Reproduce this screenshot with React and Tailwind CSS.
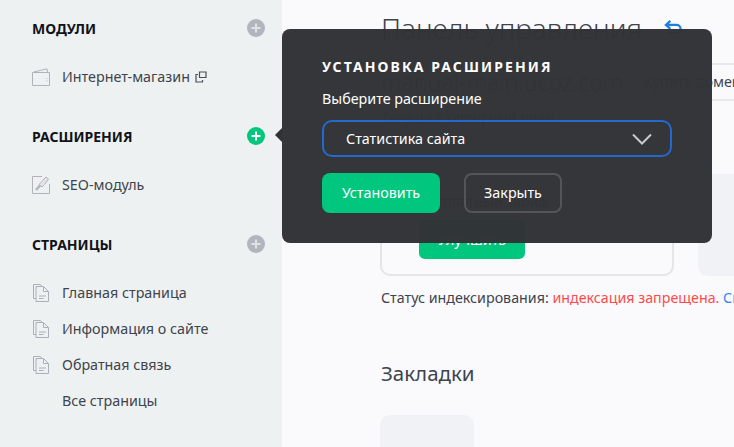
import React from "react";

const PlusIcon = ({ active }) => (
  <span className={`w-[18px] h-[18px] rounded-full flex items-center justify-center ${active ? "bg-[#00c77d]" : "bg-[#b1b5bd]"}`}>
    <svg width="10" height="10" viewBox="0 0 10 10">
      <path d="M5 0.5v9M0.5 5h9" stroke={active ? "#ffffff" : "#dfe2e6"} strokeWidth="2" />
    </svg>
  </span>
);

const WalletIcon = () => (
  <svg width="18" height="18" viewBox="0 0 18 18" fill="none" stroke="#b0b3b8">
    <path d="M0.500 4.500h17v13h-17z" strokeWidth="1" />
    <path d="M1.500 4L15 0.800l.6 3.500" strokeWidth="1" />
    <path d="M15 10v.8M15 12.500v.8" strokeWidth="1" />
  </svg>
);

const SeoIcon = () => (
  <svg width="18" height="18" viewBox="0 0 18 18" fill="none" stroke="#b0b3b8">
    <path d="M10 0.500H0.500v17h17V8" strokeWidth="1" />
    <path d="M7 8.500l2-2 5-5.500 2.500 2-4 5.500-2.500 2.500z" fill="#e3e5e7" strokeWidth="1" />
    <path d="M4 14l4-4.500" strokeWidth="2.500" />
  </svg>
);

const PageIcon = () => (
  <svg width="16" height="18" viewBox="0 0 16 18" fill="none" stroke="#a9b0ba" className="ml-[1px]">
    <path d="M3 14.500H0.500V0.500h7l2 2.500" strokeWidth="1" />
    <path d="M3 17.500V2.500h7.500l5 5v10H3z" fill="#edf1f2" strokeWidth="1" />
    <path d="M6 12h7M6 14.500h4.500" strokeWidth="1" />
    <path d="M10.500 3v4.500h5" strokeWidth="1" />
  </svg>
);

const CopyIcon = () => (
  <svg width="12" height="12" viewBox="0 0 12 12" fill="none" stroke="#4a5058" strokeWidth="1.200" className="ml-[5px]">
    <path d="M4.500 1h6.500v5.500H4.500z" />
    <path d="M3 3.500H1V11h6.500V9" />
  </svg>
);

const SectionHead = ({ title, active }) => (
  <div className="flex items-center justify-between h-[20px]">
    <span className="font-bold text-[14px] text-[#111318]">{title}</span>
    <PlusIcon active={active} />
  </div>
);

const NavItem = ({ icon, children }) => (
  <div className="flex items-center h-[36px] text-[14.3px] text-[#3e444c]">
    <span className="w-[30px] flex items-center">{icon}</span>
    {children}
  </div>
);

export default function App() {
  return (
    <div className="relative flex w-[734px] h-[447px] overflow-hidden bg-[#fafafd] font-['Noto_Sans','Open_Sans',sans-serif]">
      {/* Sidebar */}
      <div className="w-[282px] shrink-0 bg-[#edf1f2] pl-[32px] pr-[17px] pt-[18px]">
        <SectionHead title="МОДУЛИ" />
        <div className="mt-[21px] mb-[31px]">
          <NavItem icon={<WalletIcon />}>
            Интернет-магазин <CopyIcon />
          </NavItem>
        </div>
        <SectionHead title="РАСШИРЕНИЯ" active />
        <div className="mt-[21px] mb-[31px]">
          <NavItem icon={<SeoIcon />}>SEO-модуль</NavItem>
        </div>
        <SectionHead title="СТРАНИЦЫ" />
        <div className="mt-[21px]">
          <NavItem icon={<PageIcon />}>Главная страница</NavItem>
          <NavItem icon={<PageIcon />}>Информация о сайте</NavItem>
          <NavItem icon={<PageIcon />}>Обратная связь</NavItem>
          <NavItem>Все страницы</NavItem>
        </div>
      </div>

      {/* Main content behind the popup */}
      <div className="flex-1 min-w-0 pl-[99px] pt-[8px] whitespace-nowrap">
        <div className="flex items-center h-[40px] text-[28px] font-light text-[#3e444c]">
          Панель управления
          <svg width="18" height="16" viewBox="0 0 20 18" fill="none" stroke="#1d7fe6" strokeWidth="2.500" className="ml-[22px]">
            <path d="M7 1L2 5.500 7 10M2 5.500h12a4 4 0 0 1 0 9H3" />
          </svg>
        </div>
        <div className="mt-[15px] flex items-center h-[38px] border-y-2 border-[#e8e8ea] text-[#3e444c]">
          <span className="text-[23px] font-light w-[242px]">manual-main.ucoz.com</span>
          <span className="h-full flex items-center pl-[20px] border-l border-[#eeeef0] text-[14.3px]">Купить домен</span>
        </div>
        <div className="mt-[7px] text-[14.3px] text-[#3e444c] leading-[20px]">Текущий тарифный план</div>
        <div className="mt-[46px] -ml-[1px] flex gap-[24px]">
          <div className="w-[294px] h-[102px] shrink-0 border-2 border-[#e4e5e7] rounded-[10px] pl-[37px] pt-[16px]">
            <div className="flex items-center h-[20px] text-[14.3px] text-[#3e444c] gap-[6px]">
              Бесплатный тариф
              <span className="w-[18px] h-[18px] rounded-full bg-[#e4e5e7]" />
            </div>
            <div className="mt-[8px] w-[106px] h-[39px] bg-[#00c77d] rounded-[6px] text-white text-[14.3px] flex items-center justify-center">
              Улучшить
            </div>
          </div>
          <div className="w-[100px] h-[102px] shrink-0 bg-[#f1f2f5] rounded-[10px]" />
        </div>
        <div className="mt-[13px] text-[14.25px] text-[#3e444c] leading-[18px]">
          Статус индексирования: <span className="text-[#ff4a4a]">индексация запрещена.</span> <span className="text-[#3b82f6]">Снять</span>
        </div>
        <div className="mt-[52px] text-[20.5px] text-[#3e444c] leading-[28px]">Закладки</div>
        <div className="mt-[28px] -ml-[1px] w-[94px] h-[80px] bg-[#f1f2f5] rounded-[10px]" />
      </div>

      {/* Install extension popup */}
      <div className="absolute left-[282px] top-[29px] w-[430px] h-[214px] rounded-[8px] bg-[#313236]/[0.98] pl-[40px] pr-[40px] pt-[28px]">
        <div className="absolute left-[-7px] top-[99px] w-0 h-0 border-y-[7px] border-y-transparent border-r-[7px] border-r-[#313236]" />
        <div className="text-[14px] font-bold tracking-[2.1px] text-white leading-[20px]">УСТАНОВКА РАСШИРЕНИЯ</div>
        <div className="mt-[12px] text-[14.3px] text-white leading-[20px]">Выберите расширение</div>
        <div className="mt-[11px] h-[37px] rounded-[10px] border-2 border-[#2469d0] flex items-center justify-between pl-[22px] pr-[18px] text-[14.3px] text-white">
          Статистика сайта
          <svg width="20" height="12" viewBox="0 0 20 12" fill="none" stroke="#c9cacc" strokeWidth="2">
            <path d="M1 1.500l9 9 9-9" />
          </svg>
        </div>
        <div className="mt-[16px] flex gap-[24px]">
          <div className="w-[118px] h-[40px] rounded-[8px] bg-[#00c77d] text-white text-[14.3px] flex items-center justify-center">Установить</div>
          <div className="w-[98px] h-[40px] rounded-[8px] border-2 border-[#54555a] text-white text-[14.3px] flex items-center justify-center">Закрыть</div>
        </div>
      </div>
    </div>
  );
}
